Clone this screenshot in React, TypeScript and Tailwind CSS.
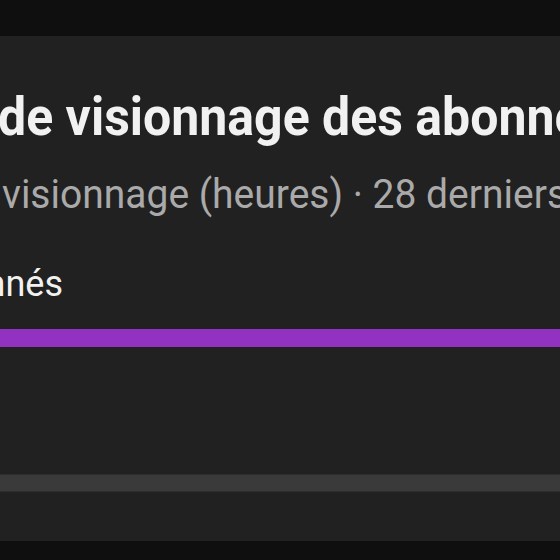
export default function App() {
  return (
    <div className="w-[560px] h-[560px] overflow-hidden bg-[#0f0f0f] font-['Roboto',sans-serif]">
      <div className="h-9" />
      <div className="h-[505px] bg-[#212121] pt-[52px] flex flex-col overflow-hidden">
        <h2 className="h-[60px] text-[50px] leading-[60px] font-bold text-[#f1f1f1] whitespace-nowrap -ml-[2px] scale-y-[1.08] origin-[50%_78%]">
          de visionnage des abonnés
        </h2>
        <p className="mt-[23px] h-[48px] text-[39px] leading-[48px] text-[#aaaaaa] whitespace-nowrap pl-[2px] scale-y-[1.05] origin-[50%_78%]">
          visionnage (heures) · 28 derniers jours
        </p>
        <div className="mt-[45px] h-[40px] w-[63px] flex justify-end overflow-hidden">
          <span className="text-[36px] leading-[40px] text-[#f1f1f1] whitespace-nowrap">Abonnés</span>
        </div>
        <div className="mt-[25px] h-[18px] w-full bg-[#9132c1]" />
        <div className="mt-[127px] h-[18px] w-full bg-[#3a3a3a] border-y border-[#2e2e2e]" />
      </div>
    </div>
  );
}
